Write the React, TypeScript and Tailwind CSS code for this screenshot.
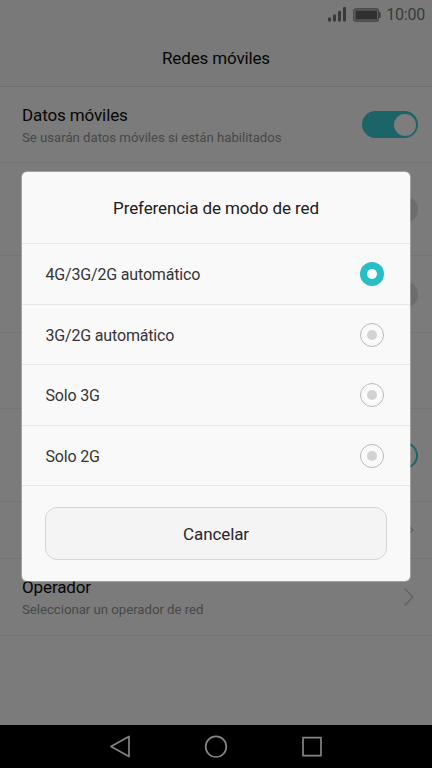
import React from "react";

const OPTIONS = ["4G/3G/2G automático", "3G/2G automático", "Solo 3G", "Solo 2G"];
const OPTION_HEIGHTS = ["h-[61px]", "h-[60px]", "h-[61px]", "h-[60px]"];
const OPTION_OFFSETS = ["pt-[2px]", "pt-[3px]", "pt-[2px]", "pt-[2px]"];

function StatusBar() {
  return (
    <div className="flex h-[30px] items-center justify-end pr-[7px] text-[#393939]">
      <svg className="mr-[6px]" width="19" height="16" viewBox="0 0 19 16" fill="currentColor">
        <rect x="0" y="10.5" width="3" height="4" rx="1" />
        <rect x="5" y="7.5" width="3" height="7" rx="1" />
        <rect x="10" y="4" width="3" height="10.5" rx="1" />
        <rect x="15" y="0" width="3" height="14.5" rx="1" />
      </svg>
      <svg className="mr-[5px]" width="28" height="16" viewBox="0 0 28 16">
        <rect x="0.8" y="1.8" width="24.6" height="12.4" rx="2" fill="#6a6a6a" stroke="#414141" strokeWidth="1.2" />
        <rect x="2.5" y="3.5" width="21.5" height="9" fill="#303030" />
        <path d="M26 5h0.8q0.7 0 0.7 0.7v4.6q0 0.7-0.7 0.7H26z" fill="#393939" />
      </svg>
      <span className="text-[16px] leading-[30px] tracking-[-0.2px]">10:00</span>
    </div>
  );
}

function Chevron() {
  return (
    <svg width="10" height="18" viewBox="0 0 10 18" fill="none" stroke="#5c5c5c" strokeWidth="1.1">
      <path d="M0.7 0.7L8.9 9L0.7 17.3" />
    </svg>
  );
}

function Knob({ className }: { className: string }) {
  return <div className={"h-[27px] w-[56px] rounded-full " + className} />;
}

function Row({ height, title, detail, children }: { height: string; title?: string; detail?: string; children?: React.ReactNode }) {
  return (
    <div className={"flex items-center justify-between border-b border-[#747474] pl-[22px] pr-[14px] " + height}>
      <div className="pt-[3px]">
        {title && <div className="text-[17px] leading-[22px] tracking-[-0.12px] text-[#060606]">{title}</div>}
        {detail && <div className="text-[13.2px] leading-[23px] tracking-[-0.02px] text-[#484848]">{detail}</div>}
      </div>
      {children}
    </div>
  );
}

function Radio({ checked }: { checked: boolean }) {
  return (
    <svg width="24" height="24" viewBox="0 0 24 24">
      {checked ? (
        <>
          <circle cx="12" cy="12" r="12" fill="#28bec6" />
          <circle cx="12" cy="12" r="5" fill="#fff" />
        </>
      ) : (
        <>
          <circle cx="12" cy="12" r="11.5" fill="#fafafa" stroke="#b9b9b9" strokeWidth="1" />
          <circle cx="12" cy="12" r="5" fill="#d3d3d3" />
        </>
      )}
    </svg>
  );
}

function Dialog() {
  return (
    <div className="absolute left-[22px] top-[172px] h-[409px] w-[388px] rounded-[5px] bg-[#f9f9f9] shadow-[0_0_0_1px_rgba(249,249,249,0.3)]">
      <h2 className="flex h-[72px] items-center justify-center border-b border-[#e6e6e6] pt-[3px] text-[17px] tracking-[-0.1px] text-[#202020]">
        Preferencia de modo de red
      </h2>
      {OPTIONS.map((label, i) => (
        <div key={label} className={"flex items-center justify-between border-b border-[#e6e6e6] pl-[23.5px] pr-[26px] text-[16px] tracking-[-0.17px] text-[#353535] " + OPTION_HEIGHTS[i]}>
          <span className={OPTION_OFFSETS[i]}>{label}</span>
          <Radio checked={i === 0} />
        </div>
      ))}
      <div className="px-[23px] pt-[21px]">
        <button className="h-[53px] w-[342px] rounded-[12px] border border-[#d6d6d6] bg-[#f4f4f4] pt-[3px] text-[17px] tracking-[-0.1px] text-[#282828]">
          Cancelar
        </button>
      </div>
    </div>
  );
}

export default function App() {
  return (
    <div className="relative flex h-[768px] w-[432px] flex-col overflow-hidden bg-[#7b7b7b] font-[Roboto,sans-serif]">
      <div className="h-[87px] border-b border-[#6e6e6e] bg-[#797979]">
        <StatusBar />
        <h1 className="text-center text-[17px] leading-[56px] tracking-[-0.14px] text-[#060606]">Redes móviles</h1>
      </div>
      <Row height="h-[76px]" title="Datos móviles" detail="Se usarán datos móviles si están habilitados">
        <div className="flex h-[27px] w-[56px] items-center justify-end rounded-full bg-[#1b6569] pr-[2px]">
          <div className="h-[22px] w-[22px] rounded-full bg-[#7d7d7d]" />
        </div>
      </Row>
      <Row height="h-[93px]"><Knob className="bg-[#6c6c6c]" /></Row>
      <Row height="h-[77px]"><Knob className="bg-[#6c6c6c]" /></Row>
      <Row height="h-[76px]" />
      <Row height="h-[93px]"><Knob className="border-2 border-[#1b6569]" /></Row>
      <Row height="h-[57px]"><div className="pr-[4px]"><Chevron /></div></Row>
      <Row height="h-[77px]" title="Operador" detail="Seleccionar un operador de red">
        <div className="pr-[4px]"><Chevron /></div>
      </Row>
      <div className="mt-auto flex h-[43px] items-center justify-center bg-black">
        <svg width="214" height="24" viewBox="0 0 214 24" fill="none" stroke="#858585" strokeWidth="1.7" strokeLinejoin="round">
          <path d="M2 11.5L20 1.5V21.5Z" />
          <circle cx="107" cy="11.7" r="10.3" />
          <rect x="194" y="2.6" width="18" height="18" />
        </svg>
      </div>
      <Dialog />
    </div>
  );
}
